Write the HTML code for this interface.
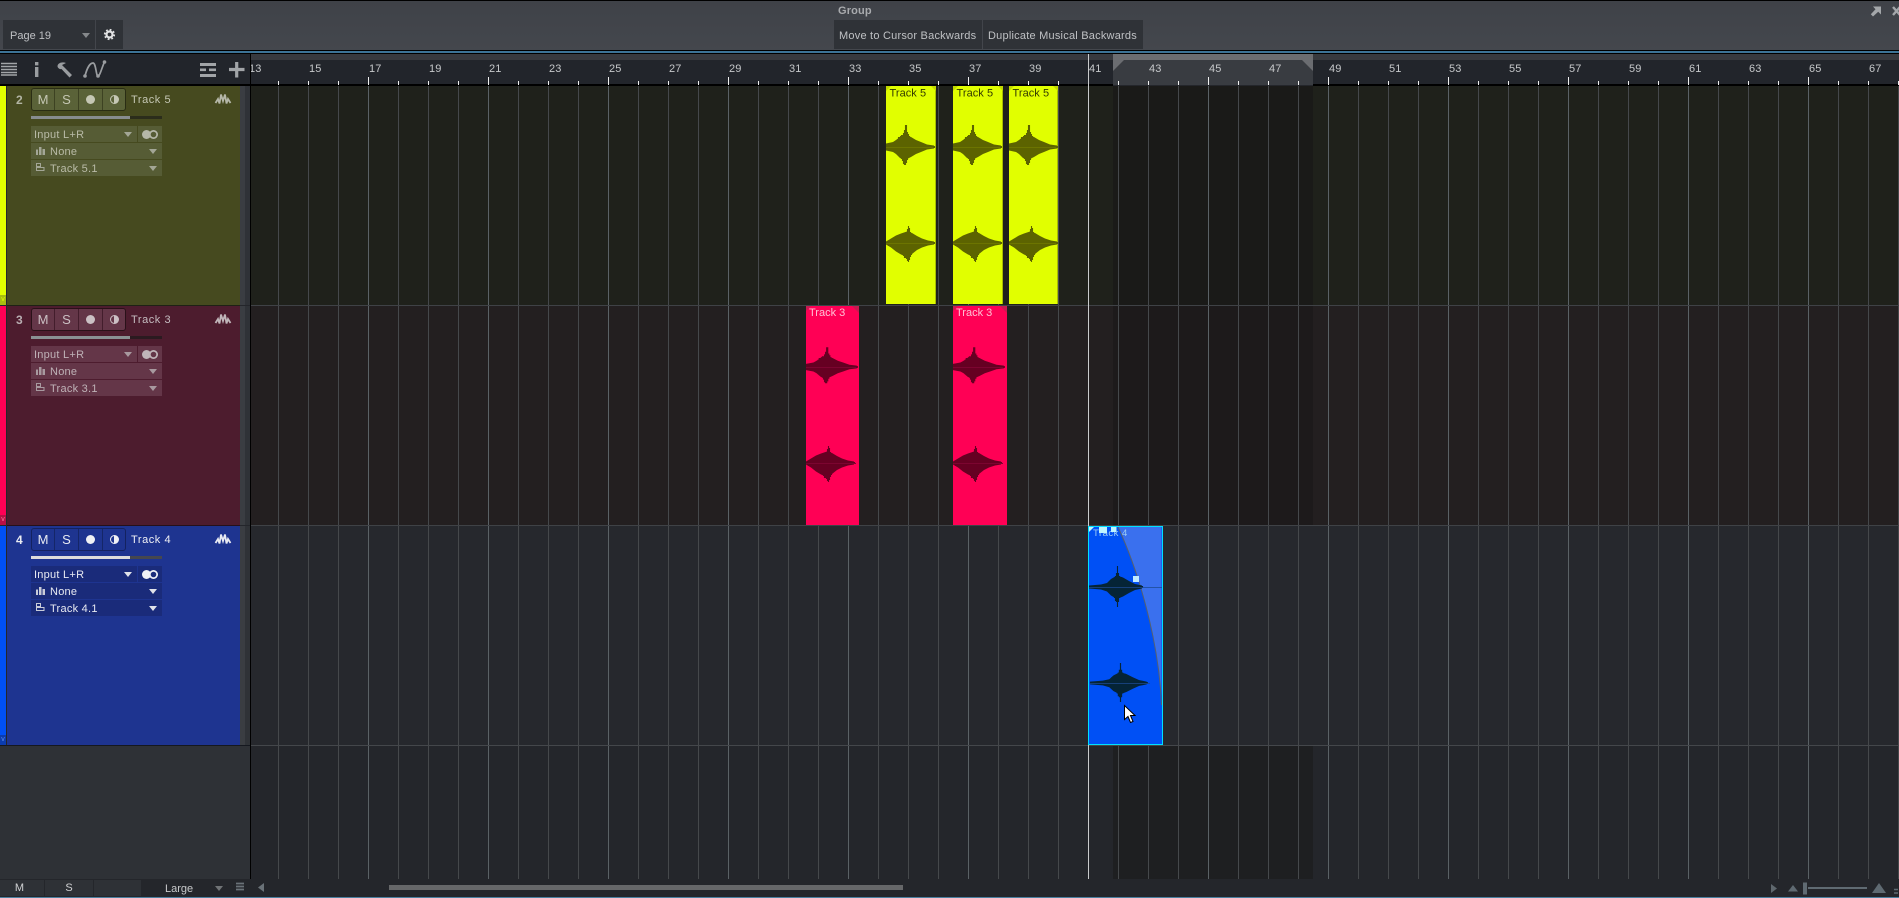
<!DOCTYPE html>
<html><head><meta charset="utf-8"><title>Arrange</title>
<style>
html,body{margin:0;padding:0;background:#22252b}
#app{position:relative;width:1899px;height:898px;overflow:hidden;background:#24262b;font-family:"Liberation Sans",sans-serif;font-size:11px;color:#c4c6c8}
.a{position:absolute;display:block}
.btn{position:absolute;background:#2f3237;color:#bfc1c4;line-height:32px;letter-spacing:.22px;white-space:nowrap}
.grid{position:absolute;left:251px;top:86px;width:1648px;height:793px;
 background-image:linear-gradient(90deg,transparent 119px,#5a6165 119px),linear-gradient(90deg,transparent 29px,#45484b 29px);
 background-size:120px 100%,30px 100%;background-position:-2px 0,-2px 0}
.ticks{position:absolute;left:251px;top:77px;width:1648px;height:8px;
 background-image:linear-gradient(90deg,transparent 119px,#f0f0f0 119px),linear-gradient(90deg,transparent 29px,#f0f0f0 29px);
 background-size:120px 8px,30px 4px;background-position:-2px 0,-2px 4px;background-repeat:repeat-x}
.nums{position:absolute;left:0;top:60px;width:1899px;height:17px}
.nums span{position:absolute;top:3px;line-height:13px;color:#c6c8ca;letter-spacing:.1px}
.row{position:absolute;left:0;width:251px;height:219px}
.stripe{position:absolute;left:0;top:0;width:6px;height:219px}
.tag{position:absolute;left:0;top:209px;width:6px;height:10px;font-size:7px;line-height:10px;text-align:center;overflow:hidden}
.hd{position:absolute;left:7px;top:0;width:233px;height:219px}
.st1{position:absolute;left:240px;top:0;width:5px;height:219px;background:#3a3d42}
.st2{position:absolute;left:245px;top:0;width:5px;height:219px;background:#2f3237}
.num{position:absolute;left:16px;top:7px;font-weight:bold;font-size:12px;line-height:14px}
.grp{position:absolute;left:31px;top:2px;width:93px;height:21px;border:1px solid;border-radius:3px;display:flex}
.grp b{display:block;height:21px;font-weight:normal;text-align:center;line-height:21px;font-size:13px;box-sizing:border-box;position:relative}
.grp i{position:absolute;left:7px;top:6px;width:9px;height:9px;border-radius:50%;display:block}
.tn{position:absolute;left:131px;top:7px;line-height:14px;letter-spacing:.55px;font-size:11px}
.sl{position:absolute;left:31px;top:30px;width:131px;height:3px}
.sl u{position:absolute;left:0;top:0;width:99px;height:3px;display:block}
.f{position:absolute;height:16px;line-height:18px;letter-spacing:.25px;white-space:nowrap}
.ar{position:absolute;width:0;height:0;border-left:4px solid transparent;border-right:4px solid transparent;border-top:5px solid;top:6px}
svg{position:absolute;overflow:visible}
</style></head>
<body><div id="app">

<!-- top bar -->
<div class="a" style="left:0;top:0;width:1899px;height:1px;background:#000"></div>
<div class="a" style="left:0;top:1px;width:1899px;height:49px;background:linear-gradient(#3f4248,#44474d)"></div>
<div class="a" style="left:0;top:50px;width:1899px;height:1px;background:#000"></div>
<div class="a" style="left:0;top:51px;width:1899px;height:2px;background:#3c7396"></div>
<div class="a" style="left:0;top:53px;width:1899px;height:1px;background:#000"></div>
<div class="a" style="left:838px;top:4px;font-weight:bold;color:#a9abae;line-height:14px;letter-spacing:.15px">Group</div>
<div class="btn" style="left:3px;top:20px;width:85px;height:29px;padding-left:7px;letter-spacing:0">Page 19
 <span class="a" style="left:79px;top:13px;width:0;height:0;border-left:4px solid transparent;border-right:4px solid transparent;border-top:5px solid #85888b"></span></div>
<div class="btn" style="left:96px;top:20px;width:27px;height:29px">
 <svg width="27" height="29" style="left:0;top:0"><circle cx="13.5" cy="14.5" r="3" fill="none" stroke="#e2e3e4" stroke-width="2.2"/><circle cx="13.5" cy="14.5" r="4.7" fill="none" stroke="#e2e3e4" stroke-width="1.8" stroke-dasharray="1.8 1.89"/></svg></div>
<div class="btn" style="left:834px;top:20px;width:143px;height:29px;padding-left:5px">Move to Cursor Backwards</div>
<div class="btn" style="left:983px;top:20px;width:155px;height:29px;padding-left:5px">Duplicate Musical Backwards</div>
<svg width="12" height="12" style="left:1870px;top:5px"><path d="M3 1.500H11V9.500L8.200 6.800 3 11.500 .8 9.200 5.500 4.200Z" fill="#a4a7aa"/></svg>
<svg width="9" height="12" style="left:1892px;top:6px"><path d="M1 1L8 9M8 1L1 9" stroke="#a4a7aa" stroke-width="2.400"/></svg>

<!-- toolbar -->
<div class="a" style="left:0;top:54px;width:250px;height:30px;background:#22252b"></div>
<div class="a" style="left:250px;top:54px;width:1px;height:692px;background:#000"></div>
<svg width="250" height="30" style="left:0;top:54px">
 <path d="M1 9.500H17M1 12.500H17M1 15.500H17M1 18.500H17M1 21H17" stroke="#a2a5a8" stroke-width="1.600"/>
 <rect x="35" y="8" width="3.400" height="3.400" fill="#9a9da0"/><rect x="35" y="13" width="3.400" height="10" fill="#9a9da0"/>
 <path d="M57.500 12.500C57.500 9 62 7.500 66 9L62 11 64.500 13.500 72 21 69.500 23.500 61.500 15C60 15.500 58 14.500 57.500 12.500Z" fill="#9a9da0"/>
 <path d="M85 22C87 14 90 9 93 9C96 9 96 22 98 22C100 22 102 13 104.500 8" fill="none" stroke="#9a9da0" stroke-width="1.700"/>
 <circle cx="85" cy="22" r="1.800" fill="#9a9da0"/><circle cx="98" cy="22" r="1.800" fill="#9a9da0"/><circle cx="104.500" cy="8" r="1.800" fill="#9a9da0"/>
 <rect x="200" y="9" width="16" height="3" fill="#a2a5a8"/><rect x="200" y="14.500" width="6" height="2.600" fill="#a2a5a8"/><rect x="209" y="14.500" width="7" height="2.600" fill="#a2a5a8"/><rect x="200" y="20" width="16" height="3" fill="#a2a5a8"/>
 <path d="M229 15.500H244.500M236.700 8V23.500" stroke="#a2a5a8" stroke-width="3.200"/>
</svg>

<!-- ruler -->
<div class="a" style="left:251px;top:54px;width:1648px;height:6px;background:#37393e"></div>
<div class="a" style="left:251px;top:60px;width:1648px;height:24px;background:#22252b"></div>
<div class="a" style="left:1113px;top:54px;width:200px;height:6px;background:#6b6d71"></div>
<div class="a" style="left:1113px;top:60px;width:200px;height:25px;background:#393c41"></div>
<svg width="200" height="11" style="left:1113px;top:60px"><path d="M0 0H11L0 11Z" fill="#6b6d71"/><path d="M200 0H189L200 11Z" fill="#6b6d71"/></svg>
<div class="a" style="left:251px;top:84px;width:862px;height:2px;background:#000"></div>
<div class="a" style="left:1313px;top:84px;width:586px;height:2px;background:#000"></div>
<div class="a" style="left:0;top:84px;width:251px;height:2px;background:#000"></div>
<div class="a" style="left:251px;top:54px;width:1648px;height:32px;overflow:hidden"><div class="nums" style="left:-251px;top:6px">
<span style="left:249px">13</span><span style="left:309px">15</span><span style="left:369px">17</span><span style="left:429px">19</span><span style="left:489px">21</span><span style="left:549px">23</span><span style="left:609px">25</span><span style="left:669px">27</span><span style="left:729px">29</span><span style="left:789px">31</span><span style="left:849px">33</span><span style="left:909px">35</span><span style="left:969px">37</span><span style="left:1029px">39</span><span style="left:1089px">41</span><span style="left:1149px">43</span><span style="left:1209px">45</span><span style="left:1269px">47</span><span style="left:1329px">49</span><span style="left:1389px">51</span><span style="left:1449px">53</span><span style="left:1509px">55</span><span style="left:1569px">57</span><span style="left:1629px">59</span><span style="left:1689px">61</span><span style="left:1749px">63</span><span style="left:1809px">65</span><span style="left:1869px">67</span>
</div></div>
<div class="ticks"></div>

<!-- lanes -->
<div class="a" style="left:251px;top:86px;width:1648px;height:219px;background:#1f211b"></div>
<div class="a" style="left:251px;top:306px;width:1648px;height:219px;background:#231f20"></div>
<div class="a" style="left:251px;top:526px;width:1648px;height:219px;background:#26282d"></div>
<div class="a" style="left:251px;top:746px;width:1648px;height:133px;background:#24262b"></div>
<div class="a" style="left:1113px;top:86px;width:200px;height:219px;background:#1a1a18"></div>
<div class="a" style="left:1113px;top:306px;width:200px;height:219px;background:#1d1a1b"></div>
<div class="a" style="left:1113px;top:746px;width:200px;height:133px;background:#1e1f21"></div>
<div class="grid"></div>
<div class="a" style="left:251px;top:305px;width:1648px;height:1px;background:#3f4246"></div>
<div class="a" style="left:251px;top:525px;width:1648px;height:1px;background:#3f4246"></div>
<div class="a" style="left:251px;top:745px;width:1648px;height:1px;background:#44474b"></div>
<div class="a" style="left:1088px;top:54px;width:1px;height:825px;background:#c9cbcc"></div>

<!-- clips -->
<svg width="1899" height="898" style="left:0;top:0" font-family="'Liberation Sans',sans-serif" font-size="11">
 <defs>
  <g id="w1"><path fill="none" stroke-width="1.1" d="M.5-3V3M1.500-3V3M2.500-3V3M3.500-3V3M4.500-3V4M5.500-3V4M6.500-4V4M7.500-4V4M8.500-5V5M9.500-6V6M10.500-7V7M11.500-8V8M12.500-10V9M13.500-10V10M14.500-11V11M15.500-12V12M16.500-12V14M17.500-14V17M18.500-17V18M19.500-22V18M20.500-22V16M21.500-15V13M22.500-13V11M23.500-11V9M24.500-10V8M25.500-9V7M26.500-8V7M27.500-7V6M28.500-7V6M29.500-6V5M30.500-5V5M31.500-5V4M32.500-4V4M33.500-4V3M34.500-4V3M35.500-3V3M36.500-3V3M37.500-2V2M38.500-2V2M39.500-2V2M40.500-2V1M41.500-1V1M42.500-1V1M43.500-1V1M44.500-1V1M45.500-1V1M46.500-1V1M47.500-1V1M48.500-1V1"/><path stroke="none" d="M0-3.500L7-5 10-7 14-10 19-12 25-10 30-7 35-5 41-2.500 48-1.500V1.500L41 2.500 35 5 30 7 25 10 19 13 14 11 10 7 7 5 0 3.500Z"/></g>
  <g id="w2"><path fill="none" stroke-width="1.1" d="M.5-1V1M1.500-2V2M2.500-2V3M3.500-3V3M4.500-3V4M5.500-4V4M6.500-4V5M7.500-5V5M8.500-5V6M9.500-6V7M10.500-6V8M11.500-6V8M12.500-7V9M13.500-7V9M14.500-8V10M15.500-8V11M16.500-8V12M17.500-9V13M18.500-10V15M19.500-10V15M20.500-11V16M21.500-14V18M22.500-17V19M23.500-15V17M24.500-11V14M25.500-10V12M26.500-9V10M27.500-8V9M28.500-8V8M29.500-7V7M30.500-7V7M31.500-6V6M32.500-6V5M33.500-5V5M34.500-5V4M35.500-4V4M36.500-4V3M37.500-3V3M38.500-3V2M39.500-3V2M40.500-2V2M41.500-2V2M42.500-2V1M43.500-2V1M44.500-2V1M45.500-1V1M46.500-1V1M47.500-1V1M48.500-1V1"/><path stroke="none" d="M0-1.500L5-4.500 10-7.500 15-9.500 21-11.500 26-10 31-7 36-4.500 42-2.500 48-1.500V1.500L42 2.500 36 4.500 31 7 26 11 21 14 15 11.500 10 8.500 5 4.500 0 1.500Z"/></g>
  <g id="w3"><path fill="none" stroke-width="1.1" d="M.5-1V1M1.500-1V1M2.500-1V1M3.500-1V1M4.500-1V1M5.500-1V1M6.500-1V1M7.500-1V1M8.500-1V1M9.500-1V1M10.500-1V2M11.500-1V2M12.500-2V2M13.500-2V2M14.500-2V2M15.500-2V3M16.500-2V3M17.500-3V3M18.500-3V4M19.500-4V5M20.500-6V6M21.500-7V7M22.500-7V8M23.500-8V8M24.500-8V9M25.500-9V11M26.500-11V14M27.500-14V15M28.500-21V20M29.500-14V15M30.500-11V11M31.500-10V10M32.500-10V9M33.500-9V8M34.500-9V8M35.500-8V7M36.500-7V6M37.500-7V6M38.500-6V5M39.500-5V5M40.500-5V4M41.500-4V4M42.500-4V3M43.500-3V3M44.500-3V3M45.500-3V2M46.500-2V2M47.500-2V2M48.500-2V2M49.500-2V1M50.500-1V1M51.500-1V1M52.500-1V1M53.500-1V1"/><path stroke="none" d="M0-1.500L12-2.500 18-4 22-8 28-11.500 34-9.500 40-6 46-3 53-1.500V1.500L46 3 40 6 34 9.500 28 12 22 8.500 18 4.500 12 2.500 0 1.500Z"/></g>
 </defs>

 <!-- Track 5 clips -->
 <g>
  <rect x="886" y="86" width="50" height="218" fill="#e1ff00"/><rect x="935" y="86" width="1" height="218" fill="#a9bd00"/>
  <rect x="953" y="86" width="50" height="218" fill="#e1ff00"/><rect x="1002" y="86" width="1" height="218" fill="#a9bd00"/>
  <rect x="1009" y="86" width="49" height="218" fill="#e1ff00"/><rect x="1057" y="86" width="1" height="218" fill="#a9bd00"/>
  <path d="M886 86h5l-5 5ZM931 86h5v5ZM953 86h5l-5 5ZM998 86h5v5ZM1009 86h5l-5 5ZM1053 86h5v5Z" fill="#c2d900"/>
  <g stroke="#5c6300" fill="#5c6300">
   <use href="#w1" x="886" y="147"/><use href="#w1" x="953" y="147"/><use href="#w1" x="1009" y="147"/>
   <use href="#w2" x="886" y="243"/><use href="#w2" x="953" y="243"/><use href="#w2" x="1009" y="243"/>
  </g>
  <path d="M886 147.500h47M953 147.500h47M1009 147.500h47M886 243.500h47M953 243.500h47M1009 243.500h47" stroke="#6c7400" stroke-width="1"/>
  <g fill="#333a00" letter-spacing=".05"><text x="889.500" y="96.500">Track 5</text><text x="956.500" y="96.500">Track 5</text><text x="1012.500" y="96.500">Track 5</text></g>
 </g>

 <!-- Track 3 clips -->
 <g>
  <rect x="806" y="306" width="53" height="219" fill="#ff0055"/>
  <rect x="953" y="306" width="54" height="219" fill="#ff0055"/>
  <path d="M806 306h5l-5 5ZM852 306h7v7ZM953 306h5l-5 5ZM1000 306h7v7Z" fill="#c81a50"/>
  <g stroke="#660022" fill="#660022">
   <use href="#w1" transform="translate(806 367) scale(1.06 .9)"/><use href="#w1" transform="translate(953 367) scale(1.06 .9)"/>
   <use href="#w2" transform="translate(806 463)"/><use href="#w2" transform="translate(953 463)"/>
  </g>
  <path d="M806 367.500h50M953 367.500h50M806 463.500h50M953 463.500h50" stroke="#7c0530" stroke-width="1"/>
  <g fill="#ffc0d4"><text x="809" y="316">Track 3</text><text x="956" y="316">Track 3</text></g>
 </g>

 <!-- Track 4 clip -->
 <g>
  <rect x="1088" y="526" width="75" height="219" fill="#0050f5"/>
  <path d="M1118 527C1138 570 1159 640 1161.500 705V527Z" fill="#3a70ee"/>
  <path d="M1118 527C1138 570 1159 640 1161.500 705" fill="none" stroke="#56606e" stroke-width="1"/>
  <g stroke="#052436" fill="#052436">
   <use href="#w3" x="1089" y="587"/>
   <use href="#w3" transform="translate(1090 683) scale(1.07 .95)"/>
  </g>
  <path d="M1088 587.500h75M1090 683.500h60" stroke="#1d4a90" stroke-width=".8"/>
  <rect x="1088.500" y="526.500" width="74" height="218" fill="none" stroke="#00e0ff" stroke-width="1"/>
  <text x="1093" y="536" fill="#9fcdf5" font-size="9.500" letter-spacing=".5">Track 4</text>
  <path d="M1089 527h5l-5 5Z" fill="#bff4ff"/>
  <rect x="1099" y="527" width="8" height="6" fill="#bff4ff"/>
  <rect x="1111" y="527" width="5.500" height="5" fill="#bff4ff"/>
  <rect x="1133" y="576" width="6" height="6" fill="#bfeaff"/>
  <path d="M1124.500 705.500V719.500L1128 716.500 1130.500 722.500 1133 721.500 1130.500 715.500 1135 715.500Z" fill="#fff" stroke="#000" stroke-width="1"/>
 </g>
</svg>

<!-- Track headers -->
<!-- row 2 -->
<div class="row" style="top:86px">
 <div class="stripe" style="background:#e1ff00"></div><div class="tag" style="background:#a8bd10;color:#e1ff00">v</div>
 <div class="hd" style="background:#464a1f"></div><div class="st1"></div><div class="st2"></div>
 <div class="num" style="color:#b3b5a4">2</div>
 <div class="grp" style="border-color:#2a2d14;background:#5a6238;color:#c5c7b4">
  <b style="width:23px;border-right:1px solid #3d4222">M</b><b style="width:24px;border-right:1px solid #3d4222">S</b><b style="width:24px;border-right:1px solid #3d4222"><i style="background:#c5c7b4"></i></b><b style="width:22px"><i style="background:linear-gradient(90deg,#5a6238 45%,#c5c7b4 45%);border:1px solid #c5c7b4;width:7px;height:7px"></i></b>
 </div>
 <div class="tn" style="color:#c5c7b4">Track 5</div>
 <svg width="18" height="12" style="left:215px;top:7px"><path d="M.5 10L3 6 4.500 10.500 6 1.500 8 8 10 1.500 11.500 10.500 13 6 15.500 10" fill="none" stroke="#b5b7a8" stroke-width="1.800"/></svg>
 <div class="sl" style="background:#2b2d1b"><u style="background:#878c8e"></u></div>
 <div class="f" style="left:31px;top:40px;width:106px;background:#565c35;color:#b9bba7;padding-left:3px;box-sizing:border-box">Input L+R<span class="ar" style="left:93px;color:#a3a696"></span></div>
 <div class="f" style="left:138px;top:40px;width:24px;background:#565c35"></div>
 <svg width="16" height="9" style="left:142px;top:44px"><circle cx="4.500" cy="4.500" r="4.500" fill="#b5b7a8"/><circle cx="11.500" cy="4.500" r="4.500" fill="#b5b7a8"/><circle cx="11.500" cy="4.500" r="2.800" fill="#565c35"/></svg>
 <div class="f" style="left:31px;top:57px;width:131px;background:#565c35;color:#b9bba7;padding-left:19px;box-sizing:border-box">None<span class="ar" style="left:118px;color:#a3a696"></span></div>
 <svg width="9" height="9" style="left:36px;top:60px"><path d="M0 3.500h2V9H0ZM3 1h2.500v8H3ZM6.500 3h2.500v6H6.500Z" fill="#a3a696"/></svg>
 <div class="f" style="left:31px;top:74px;width:131px;background:#565c35;color:#b9bba7;padding-left:19px;box-sizing:border-box">Track 5.1<span class="ar" style="left:118px;color:#a3a696"></span></div>
 <svg width="9" height="9" style="left:36px;top:77px"><path d="M.5.500h4v3h-4ZM.5 4.500h7.500v3H.5Z" fill="none" stroke="#a3a696"/></svg>
</div>
<div class="a" style="left:7px;top:305px;width:233px;height:1px;background:#1f2115"></div>

<!-- row 3 -->
<div class="row" style="top:306px">
 <div class="stripe" style="background:#ff0055"></div><div class="tag" style="background:#b80f45;color:#ff7aa0">v</div>
 <div class="hd" style="background:#4d1c2e"></div><div class="st1"></div><div class="st2"></div>
 <div class="num" style="color:#b9aeb2">3</div>
 <div class="grp" style="border-color:#2a1119;background:#643648;color:#cbc0c4">
  <b style="width:23px;border-right:1px solid #431d2c">M</b><b style="width:24px;border-right:1px solid #431d2c">S</b><b style="width:24px;border-right:1px solid #431d2c"><i style="background:#cbc0c4"></i></b><b style="width:22px"><i style="background:linear-gradient(90deg,#643648 45%,#cbc0c4 45%);border:1px solid #cbc0c4;width:7px;height:7px"></i></b>
 </div>
 <div class="tn" style="color:#c5bcc0">Track 3</div>
 <svg width="18" height="12" style="left:215px;top:7px"><path d="M.5 10L3 6 4.500 10.500 6 1.500 8 8 10 1.500 11.500 10.500 13 6 15.500 10" fill="none" stroke="#c0b5b9" stroke-width="1.800"/></svg>
 <div class="sl" style="background:#2b1a20"><u style="background:#8a9093"></u></div>
 <div class="f" style="left:31px;top:40px;width:106px;background:#643648;color:#bfb2b7;padding-left:3px;box-sizing:border-box">Input L+R<span class="ar" style="left:93px;color:#a8999f"></span></div>
 <div class="f" style="left:138px;top:40px;width:24px;background:#643648"></div>
 <svg width="16" height="9" style="left:142px;top:44px"><circle cx="4.500" cy="4.500" r="4.500" fill="#c0b5b9"/><circle cx="11.500" cy="4.500" r="4.500" fill="#c0b5b9"/><circle cx="11.500" cy="4.500" r="2.800" fill="#643648"/></svg>
 <div class="f" style="left:31px;top:57px;width:131px;background:#643648;color:#bfb2b7;padding-left:19px;box-sizing:border-box">None<span class="ar" style="left:118px;color:#a8999f"></span></div>
 <svg width="9" height="9" style="left:36px;top:60px"><path d="M0 3.500h2V9H0ZM3 1h2.500v8H3ZM6.500 3h2.500v6H6.500Z" fill="#a8999f"/></svg>
 <div class="f" style="left:31px;top:74px;width:131px;background:#643648;color:#bfb2b7;padding-left:19px;box-sizing:border-box">Track 3.1<span class="ar" style="left:118px;color:#a8999f"></span></div>
 <svg width="9" height="9" style="left:36px;top:77px"><path d="M.5.500h4v3h-4ZM.5 4.500h7.500v3H.5Z" fill="none" stroke="#a8999f"/></svg>
</div>
<div class="a" style="left:7px;top:525px;width:233px;height:1px;background:#26101a"></div>

<!-- row 4 -->
<div class="row" style="top:526px">
 <div class="stripe" style="background:#0050f5"></div><div class="tag" style="background:#0b3cb0;color:#5f90f0">v</div>
 <div class="hd" style="background:#1e3490"></div><div class="st1"></div><div class="st2"></div>
 <div class="num" style="color:#eaecf2">4</div>
 <div class="grp" style="border-color:#142260;background:#1e3490;color:#e8eaf2">
  <b style="width:23px;border-right:1px solid #152668">M</b><b style="width:24px;border-right:1px solid #152668">S</b><b style="width:24px;border-right:1px solid #152668"><i style="background:#f0f1f5"></i></b><b style="width:22px"><i style="background:linear-gradient(90deg,#1e3490 45%,#f0f1f5 45%);border:1px solid #f0f1f5;width:7px;height:7px"></i></b>
 </div>
 <div class="tn" style="color:#f0f1f5">Track 4</div>
 <svg width="18" height="12" style="left:215px;top:7px"><path d="M.5 10L3 6 4.500 10.500 6 1.500 8 8 10 1.500 11.500 10.500 13 6 15.500 10" fill="none" stroke="#e8eaf2" stroke-width="1.800"/></svg>
 <div class="sl" style="background:#45474f"><u style="background:#dcdcdc"></u></div>
 <div class="f" style="left:31px;top:40px;width:106px;background:#1a2b7a;color:#e8eaf2;padding-left:3px;box-sizing:border-box">Input L+R<span class="ar" style="left:93px;color:#e0e2ea"></span></div>
 <div class="f" style="left:138px;top:40px;width:24px;background:#1a2b7a"></div>
 <svg width="16" height="9" style="left:142px;top:44px"><circle cx="4.500" cy="4.500" r="4.500" fill="#f0f1f5"/><circle cx="11.500" cy="4.500" r="4.500" fill="#f0f1f5"/><circle cx="11.500" cy="4.500" r="2.800" fill="#1a2b7a"/></svg>
 <div class="f" style="left:31px;top:57px;width:131px;background:#1a2b7a;color:#e8eaf2;padding-left:19px;box-sizing:border-box">None<span class="ar" style="left:118px;color:#e0e2ea"></span></div>
 <svg width="9" height="9" style="left:36px;top:60px"><path d="M0 3.500h2V9H0ZM3 1h2.500v8H3ZM6.500 3h2.500v6H6.500Z" fill="#c8cbd8"/></svg>
 <div class="f" style="left:31px;top:74px;width:131px;background:#1a2b7a;color:#e8eaf2;padding-left:19px;box-sizing:border-box">Track 4.1<span class="ar" style="left:118px;color:#e0e2ea"></span></div>
 <svg width="9" height="9" style="left:36px;top:77px"><path d="M.5.500h4v3h-4ZM.5 4.500h7.500v3H.5Z" fill="none" stroke="#c8cbd8"/></svg>
</div>
<div class="a" style="left:0;top:745px;width:250px;height:1px;background:#15181f"></div>

<!-- bottom left empty -->
<div class="a" style="left:0;top:746px;width:250px;height:133px;background:#2e3136"></div>
<div class="a" style="left:250px;top:746px;width:1px;height:133px;background:#000"></div>

<!-- bottom bar -->
<div class="a" style="left:0;top:879px;width:1899px;height:18px;background:#24262b"></div>
<div class="a" style="left:0;top:880px;width:39px;padding-right:5px;height:16px;background:#2e3136;text-align:center;line-height:17px;color:#d0d1d3">M</div>
<div class="a" style="left:45px;top:880px;width:48px;height:16px;background:#2e3136;text-align:center;line-height:17px;color:#d0d1d3">S</div>
<div class="a" style="left:94px;top:880px;width:47px;height:16px;background:#2e3136"></div>
<div class="a" style="left:165px;top:880px;line-height:18px;color:#c8c9cb">Large</div>
<div class="a" style="left:215px;top:886px;width:0;height:0;border-left:4px solid transparent;border-right:4px solid transparent;border-top:5px solid #707376"></div>
<svg width="10" height="9" style="left:236px;top:883px"><path d="M0 .5H8M0 3.500H8M0 6.500H8" stroke="#6a7278" stroke-width="1.800"/></svg>
<svg width="7" height="10" style="left:258px;top:883px"><path d="M6 0V9L0 4.500Z" fill="#6a7278"/></svg>
<div class="a" style="left:389px;top:885px;width:514px;height:5px;background:#666769"></div>
<svg width="140" height="18" style="left:1760px;top:879px">
 <path d="M11 5V14L17 9.500Z" fill="#5f686e"/>
 <path d="M28 12.500L33 6 38 12.500Z" fill="#5f6a72"/>
 <rect x="43" y="3.500" width="4" height="12" fill="#5f6a72"/>
 <rect x="48" y="8" width="59" height="2" fill="#5f6a72"/>
 <path d="M112 14L119 4 126 14Z" fill="#5f6a72"/>
 <path d="M134 10.500H138M134 14H138" stroke="#5f6a72" stroke-width="1.500"/>
</svg>
<div class="a" style="left:0;top:897px;width:1899px;height:1px;background:#4a7f9f"></div>

</div></body></html>
